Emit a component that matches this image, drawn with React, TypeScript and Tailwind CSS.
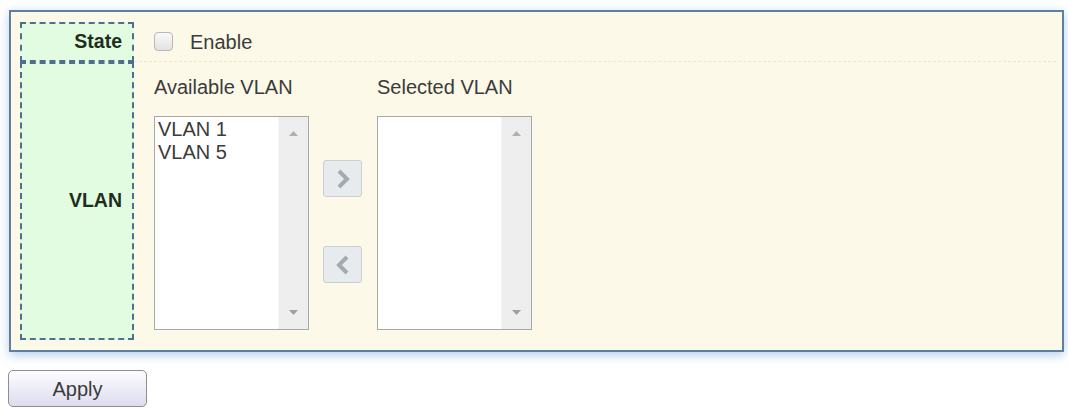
const font = { fontFamily: '"Liberation Sans", Arial, sans-serif' };

function ListBox({ items }: { items: string[] }) {
  return (
    <div className="flex h-[214px] w-[155px] border border-[#a8a8a8] bg-white">
      <div className="flex-1 pl-[3px] pt-[1px] text-[20px] leading-[23px] text-[#3b3b3b]">
        {items.map((v) => (
          <div key={v}>{v}</div>
        ))}
      </div>
      <div className="flex w-[30px] flex-col items-center justify-between border-l border-[#f4f4f4] bg-[#eeeeee] pt-[14px] pb-[14px]">
        <svg width="9" height="5" viewBox="0 0 9 5">
          <path d="M0 5 L4.5 0 L9 5 Z" fill="#b0b0b0" />
        </svg>
        <svg width="9" height="5" viewBox="0 0 9 5">
          <path d="M0 0 L4.5 5 L9 0 Z" fill="#a0a0a0" />
        </svg>
      </div>
    </div>
  );
}

function MoveButton({ dir }: { dir: 'right' | 'left' }) {
  return (
    <div className="flex h-[37px] w-[39px] items-center justify-center rounded-[3px] border border-[#c9cfd3] bg-[#e7ebee]">
      <svg width="16" height="20" viewBox="0 0 16 20">
        <path
          d={dir === 'right' ? 'M4 2 L12 10 L4 18' : 'M12 2 L4 10 L12 18'}
          fill="none"
          stroke="#a3abb2"
          strokeWidth="4"
        />
      </svg>
    </div>
  );
}

export default function App() {
  return (
    <div className="min-h-[412px] w-[1068px] bg-white pt-[10px] pl-[9px]" style={font}>
      <div className="h-[342px] w-[1055px] border-2 border-[#5d80a2] bg-[#fcf9e8] pt-[10px] pl-[9px] pr-[6px] shadow-[0_3px_10px_rgba(120,165,215,0.55)]">
        <div className="grid grid-cols-[114px_1fr] grid-rows-[40px_278px]">
          <div className="flex items-center justify-end border-2 border-dashed border-[#4e6f8f] bg-[#e1fce0] pr-[10px] text-[19.5px] font-bold text-[#1f2d1f]">
            State
          </div>
          <div className="flex items-center border-b border-dashed border-[#ece7d2] pl-[20px]">
            <div className="h-[19px] w-[19px] rounded-[4px] border border-[#b8b8b8] bg-gradient-to-b from-[#fafafa] to-[#e2e2e2]" />
            <span className="ml-[17px] text-[20px] text-[#3b3b3b]">Enable</span>
          </div>
          <div className="flex items-center justify-end border-2 border-dashed border-[#4e6f8f] bg-[#e1fce0] pr-[10px] text-[19.5px] font-bold text-[#1f2d1f]">
            VLAN
          </div>
          <div className="flex pl-[20px] pt-[14px]">
            <div className="flex flex-col">
              <span className="text-[20px] leading-[22px] text-[#3b3b3b]">Available VLAN</span>
              <div className="mt-[18px]">
                <ListBox items={['VLAN 1', 'VLAN 5']} />
              </div>
            </div>
            <div className="ml-[14px] mr-[15px] flex flex-col gap-[49px] pt-[84px]">
              <MoveButton dir="right" />
              <MoveButton dir="left" />
            </div>
            <div className="flex flex-col">
              <span className="text-[20px] leading-[22px] text-[#3b3b3b]">Selected VLAN</span>
              <div className="mt-[18px]">
                <ListBox items={[]} />
              </div>
            </div>
          </div>
        </div>
      </div>
      <button className="mt-[18px] -ml-px flex h-[37px] w-[139px] items-center justify-center rounded-[5px] border border-[#8e8e8e] bg-gradient-to-b from-[#fdfdff] to-[#dcdcef] text-[20px] text-[#3a3a3a]">
        Apply
      </button>
    </div>
  );
}
